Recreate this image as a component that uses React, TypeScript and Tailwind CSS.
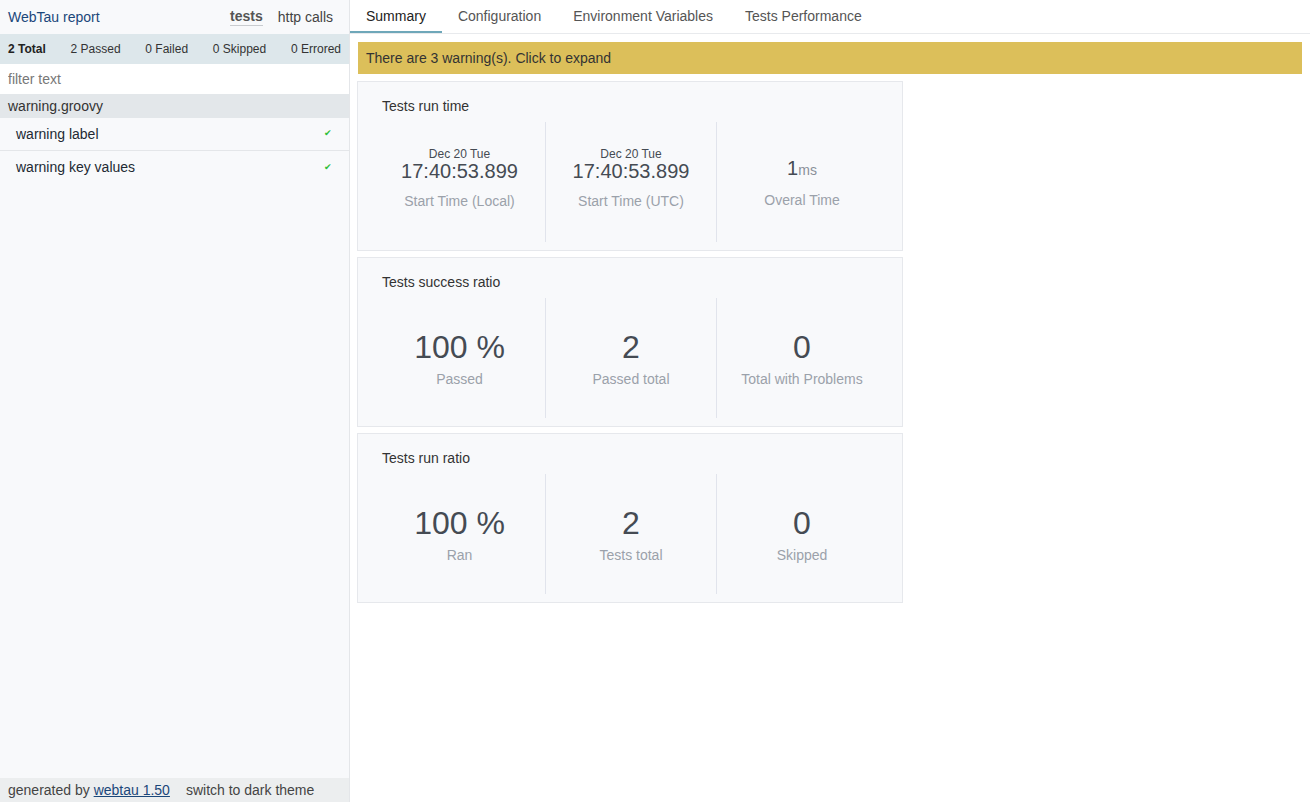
import React from 'react';

interface Metric {
  value: React.ReactNode;
  label: string;
}

const font = { fontFamily: '"Liberation Sans", Arial, sans-serif' };

const Card: React.FC<{ title: string; metrics: Metric[]; top?: boolean }> = ({ title, metrics, top }) => (
  <div className="w-[546px] border border-[#e6e8ec] bg-[#f8f9fb] pt-[14px] pb-[8px] pl-[16px] pr-[15px]">
    <div className="pl-[8px] text-[14px] leading-[20px] text-[#333]">{title}</div>
    <div className="mt-[6px] flex">
      {metrics.map((m, i) => (
        <div
          key={i}
          className={
            'flex h-[120px] w-[171px] flex-col items-center ' +
            (top ? 'justify-start pt-[25px] ' : 'justify-center ') +
            (i > 0 ? 'border-l border-[#e1e4ec]' : '')
          }
        >
          {m.value}
          <div className="text-[14px] leading-[20px] text-[#9ba1aa]">{m.label}</div>
        </div>
      ))}
    </div>
  </div>
);

const TimeValue: React.FC<{ date: string; time: string }> = ({ date, time }) => (
  <div className="mb-[9px] flex flex-col items-center text-[#454b53]">
    <div className="text-[12px] leading-[14px]">{date}</div>
    <div className="text-[20px] leading-[21px]">{time}</div>
  </div>
);

const BigValue: React.FC<{ v: string }> = ({ v }) => (
  <div className="mb-[3px] text-[32px] leading-[38px] text-[#454b53]">{v}</div>
);

const App: React.FC = () => {
  return (
    <div className="flex h-[802px] w-[1310px] overflow-hidden bg-white" style={font}>
      {/* sidebar */}
      <div className="flex h-full w-[350px] flex-col border-r border-[#e4e6e9] bg-[#f8f9fb]">
        <div className="flex h-[34px] items-center justify-between pl-[8px] pr-[16px]">
          <span className="text-[14px] text-[#1b477a]">WebTau report</span>
          <div className="flex items-center gap-[15px] text-[14px]">
            <span className="border-b border-[#c9ccd0] font-bold leading-[17px] text-[#555]">tests</span>
            <span className="text-[#444]">http calls</span>
          </div>
        </div>
        <div className="flex h-[30px] items-center justify-between bg-[#dde7eb] pl-[8px] pr-[8px] text-[12px] text-[#333]">
          <span className="font-bold text-[#222]">2 Total</span>
          <span>2 Passed</span>
          <span>0 Failed</span>
          <span>0 Skipped</span>
          <span>0 Errored</span>
        </div>
        <input
          placeholder="filter text"
          className="h-[30px] bg-white px-[8px] text-[14px] text-[#333] outline-none placeholder:text-[#777]"
        />
        <div className="flex h-[24px] items-center bg-[#e3e7ea] px-[8px] text-[14px] text-[#333]">
          warning.groovy
        </div>
        {['warning label', 'warning key values'].map((t, i) => (
          <div
            key={t}
            className={
              'flex h-[33px] items-center justify-between pl-[16px] pr-[17px] text-[14px] text-[#222a33] ' +
              (i === 0 ? 'border-b border-[#e4e6e9]' : '')
            }
          >
            <span>{t}</span>
            <span className="text-[9px] text-[#2fbf3a]">✔</span>
          </div>
        ))}
        <div className="flex-1" />
        <div className="flex h-[24px] items-center bg-[#eceeef] px-[8px] text-[14px] text-[#444]">
          <span>
            generated by{' '}
            <a className="text-[#1b477a] underline" href="#">
              webtau 1.50
            </a>
          </span>
          <span className="ml-[16px]">switch to dark theme</span>
        </div>
      </div>

      {/* main */}
      <div className="flex flex-1 flex-col">
        <div className="flex h-[34px] border-b border-[#e8eaed] text-[14px]">
          <div className="flex items-center border-b-2 border-[#6ea7b9] px-[16px] pt-[2px] text-[#222]">Summary</div>
          <div className="flex items-center px-[16px] text-[#555]">Configuration</div>
          <div className="flex items-center px-[16px] text-[#555]">Environment Variables</div>
          <div className="flex items-center px-[16px] text-[#555]">Tests Performance</div>
        </div>
        <div className="pl-[8px] pr-[8px] pt-[8px]">
          <div className="flex h-[32px] items-center bg-[#dcbf5a] px-[8px] text-[14px] text-[#333]">
            There are 3 warning(s). Click to expand
          </div>
        </div>
        <div className="flex flex-col gap-[6px] pl-[7px] pt-[7px]">
          <Card
            top
            title="Tests run time"
            metrics={[
              { value: <TimeValue date="Dec 20 Tue" time="17:40:53.899" />, label: 'Start Time (Local)' },
              { value: <TimeValue date="Dec 20 Tue" time="17:40:53.899" />, label: 'Start Time (UTC)' },
              {
                value: (
                  <div className="mb-[9px] mt-[10px] flex items-baseline text-[#454b53]">
                    <span className="text-[20px] leading-[22px]">1</span>
                    <span className="text-[14px] text-[#8a9099]">ms</span>
                  </div>
                ),
                label: 'Overal Time',
              },
            ]}
          />
          <Card
            title="Tests success ratio"
            metrics={[
              { value: <BigValue v="100 %" />, label: 'Passed' },
              { value: <BigValue v="2" />, label: 'Passed total' },
              { value: <BigValue v="0" />, label: 'Total with Problems' },
            ]}
          />
          <Card
            title="Tests run ratio"
            metrics={[
              { value: <BigValue v="100 %" />, label: 'Ran' },
              { value: <BigValue v="2" />, label: 'Tests total' },
              { value: <BigValue v="0" />, label: 'Skipped' },
            ]}
          />
        </div>
      </div>
    </div>
  );
};

export default App;
